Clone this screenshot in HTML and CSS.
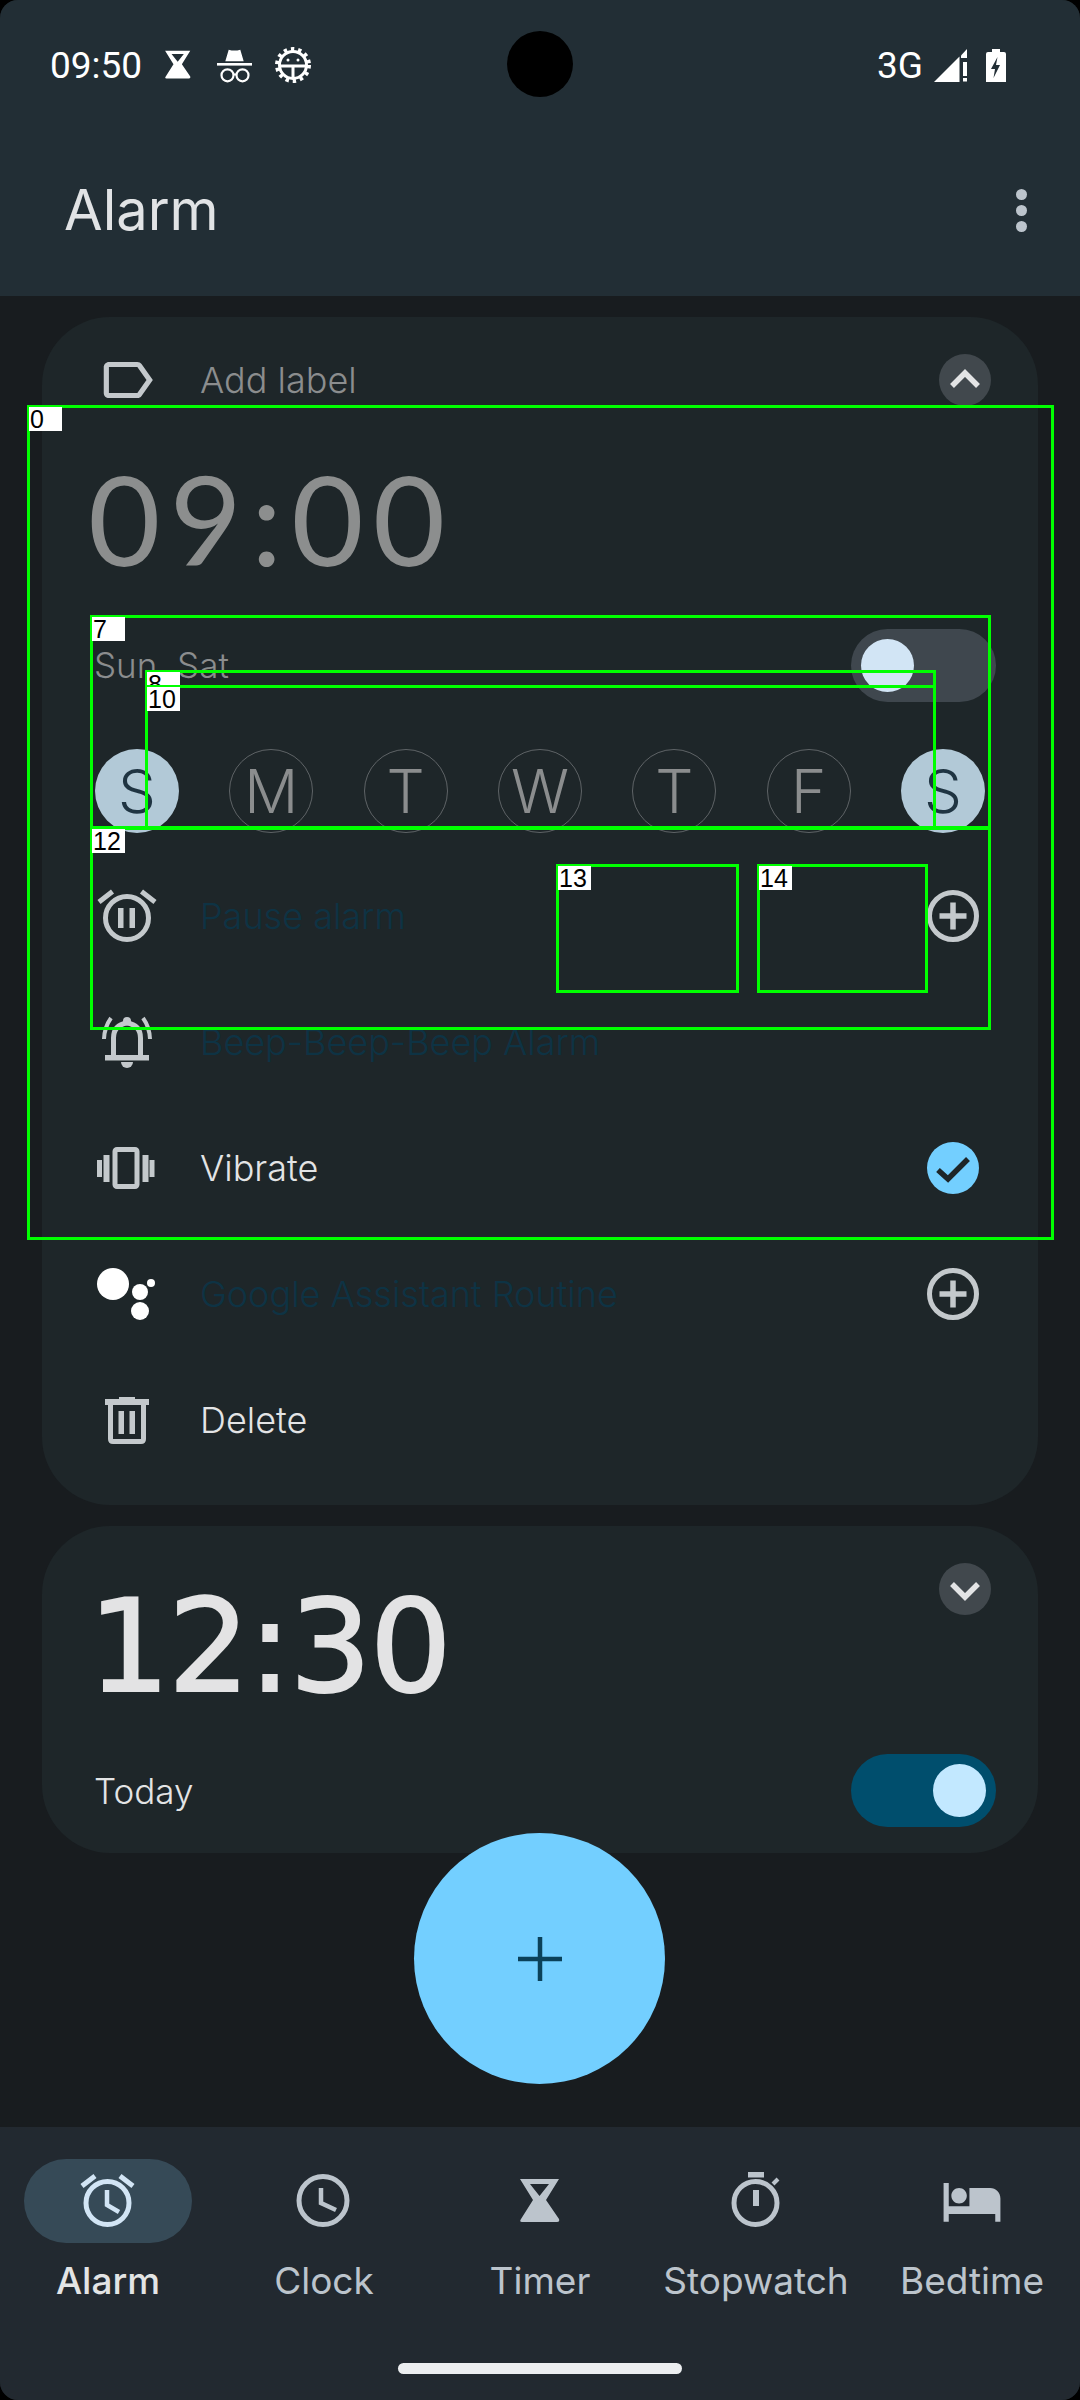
FILE: index.html
```html
<!DOCTYPE html>
<html lang="en">
<head>
    <meta charset="UTF-8">
    <meta name="viewport" content="width=device-width, initial-scale=1.0">
    <title>Alarm</title>
    <link rel="stylesheet" href="styles.css">
</head>
<body>
    <!-- Shared icons -->
    <svg class="defs" aria-hidden="true">
        <symbol id="hourglass" viewBox="0 0 62 62">
            <path fill-rule="evenodd" d="M11 9H50L37 30L50 49Q51 52 48 52H13Q10 52 12 49L24 30ZM21 14H40L30.5 26Z"/>
        </symbol>
        <symbol id="plusCircle" viewBox="0 0 52 52">
            <circle cx="26" cy="26" r="23.5" fill="none" stroke="currentColor" stroke-width="5"/>
            <path d="M12.5 26H39.5M26 12.5V39.5" stroke="currentColor" stroke-width="5.5"/>
        </symbol>
    </svg>

    <div class="phone">
        <header class="topbar">
            <div class="statusbar">
                <span class="status-time">09:50</span>
                <svg class="st-hourglass"><use href="#hourglass"/></svg>
                <svg class="st-incognito" viewBox="0 0 35 35">
                    <path d="M8.3 13.3L11.7 1.7Q17.5 3.5 23.3 1.7L26.7 13.3Z" fill="#fff"/>
                    <rect x="0" y="15" width="35" height="2.6" fill="#fff"/>
                    <g fill="none" stroke="#fff" stroke-width="2.2">
                        <circle cx="10.5" cy="27.3" r="6"/>
                        <circle cx="25.5" cy="27.3" r="6"/>
                        <path d="M16 26.5H20"/>
                    </g>
                </svg>
                <svg class="st-bug" viewBox="0 0 36 36">
                    <g fill="none" stroke="#fff">
                        <circle cx="18" cy="18" r="13.5" stroke-width="3"/>
                        <circle cx="18" cy="18" r="16" stroke-width="4" stroke-dasharray="3.4 3.88"/>
                        <path d="M5 19H31M18 19V31" stroke-width="3"/>
                    </g>
                    <circle cx="13" cy="13" r="1.5" fill="#fff"/>
                    <circle cx="23" cy="13" r="1.5" fill="#fff"/>
                </svg>
                <div class="camera"></div>
                <span class="status-net">3G</span>
                <svg class="st-signal" viewBox="0 0 33 33" fill="#fff">
                    <path d="M0 33L25.5 7.5V33Z"/>
                    <path d="M27 6.5L33 0V9H27Z"/>
                    <rect x="29" y="13" width="4" height="14"/>
                    <rect x="29" y="29" width="4" height="3.5"/>
                </svg>
                <svg class="st-battery" viewBox="0 0 20 33">
                    <path d="M6 0H14V3H18Q20 3 20 5V33H0V5Q0 3 2 3H6Z" fill="#fff"/>
                    <path d="M11.5 8L5 20H9L7.5 29L14 16H10Z" fill="#222e35"/>
                </svg>
            </div>
            <div class="titlebar">
                <h1 class="title">Alarm</h1>
                <div class="overflow"><span></span><span></span><span></span></div>
            </div>
        </header>

        <main class="list">
            <section class="card card-open">
                <div class="row row-label">
                    <svg class="row-icon" viewBox="0 0 24 24"><path d="M17.63 5.84C17.27 5.33 16.67 5 16 5L5 5.01C3.9 5.01 3 5.9 3 7v10c0 1.1.9 1.99 2 1.99L16 19c.67 0 1.27-.33 1.63-.84L22 12l-4.37-6.16zM16 17H5V7h11l3.55 5L16 17z"/></svg>
                    <span class="row-text text-muted">Add label</span>
                    <svg class="chevron" viewBox="0 0 52 52"><circle cx="26" cy="26" r="26" fill="#41484d"/><path d="M13 32L26 19L39 32" fill="none" stroke="#e3e4e5" stroke-width="5.5"/></svg>
                </div>
                <div class="time-off">09:00</div>
                <div class="repeat">
                    <span class="repeat-text text-muted">Sun, Sat</span>
                    <div class="switch"><div class="thumb"></div></div>
                </div>
                <div class="days">
                    <div class="day day-on">S</div>
                    <div class="day">M</div>
                    <div class="day">T</div>
                    <div class="day">W</div>
                    <div class="day">T</div>
                    <div class="day">F</div>
                    <div class="day day-on">S</div>
                </div>
                <div class="row">
                    <svg class="row-icon" viewBox="0 0 62 62">
                        <circle cx="31" cy="33" r="21.5" fill="none" stroke="currentColor" stroke-width="5"/>
                        <path d="M22 23h5.5v20H22zM33.5 23H39v20h-5.5z"/>
                        <path d="M3 17L16.5 6.5M59 17L45.5 6.5" stroke="currentColor" stroke-width="5"/>
                    </svg>
                    <span class="row-text text-dim">Pause alarm</span>
                    <svg class="row-end"><use href="#plusCircle"/></svg>
                </div>
                <div class="row">
                    <svg class="row-icon" viewBox="0 0 62 62">
                        <path d="M17.5 45V27Q17.5 14 31 12Q44.5 14 44.5 27V45" fill="none" stroke="currentColor" stroke-width="5"/>
                        <circle cx="31" cy="10" r="4"/>
                        <rect x="9" y="44" width="44" height="5.5"/>
                        <path d="M25 51H37A6 6 0 0 1 25 51Z"/>
                        <path d="M8 28Q8.5 16 15 7M54 28Q53.5 16 47 7" fill="none" stroke="currentColor" stroke-width="4"/>
                    </svg>
                    <span class="row-text text-dim">Beep-Beep-Beep Alarm</span>
                </div>
                <div class="row">
                    <svg class="row-icon" viewBox="0 0 62 62">
                        <rect x="19" y="12.5" width="22" height="37" rx="2" fill="none" stroke="currentColor" stroke-width="5"/>
                        <path d="M7.5 18h6v27h-6zM1 23h5v17H1zM46.5 18h6v27h-6zM53.5 23h5v17h-5z"/>
                    </svg>
                    <span class="row-text">Vibrate</span>
                    <svg class="row-end" viewBox="0 0 52 52">
                        <circle cx="26" cy="26" r="26" fill="#73cfff"/>
                        <path d="M11 28L21 37L41 17" fill="none" stroke="#1e2629" stroke-width="5.5"/>
                    </svg>
                </div>
                <div class="row">
                    <svg class="row-icon row-icon-white" viewBox="0 0 62 62">
                        <circle cx="17" cy="21" r="16"/>
                        <circle cx="44" cy="29" r="8"/>
                        <circle cx="44" cy="48" r="9"/>
                        <circle cx="55" cy="20" r="4"/>
                    </svg>
                    <span class="row-text text-dim">Google Assistant Routine</span>
                    <svg class="row-end"><use href="#plusCircle"/></svg>
                </div>
                <div class="row">
                    <svg class="row-icon" viewBox="0 0 62 62">
                        <path d="M23 8h16v3H23zM9 10h44v6H9zM22.5 22H28v23h-5.5zM33.5 22H39v23h-5.5z"/>
                        <path d="M14.5 16V50Q14.5 52.500 17 52.500H45Q47.500 52.500 47.500 50V16" fill="none" stroke="currentColor" stroke-width="5"/>
                    </svg>
                    <span class="row-text">Delete</span>
                </div>
            </section>

            <section class="card card-closed">
                <div class="closed-top">
                    <div class="time-on">12:30</div>
                    <svg class="chevron" viewBox="0 0 52 52"><circle cx="26" cy="26" r="26" fill="#41484d"/><path d="M13 21L26 34L39 21" fill="none" stroke="#e3e4e5" stroke-width="5.5"/></svg>
                </div>
                <div class="repeat repeat-on">
                    <span class="repeat-text">Today</span>
                    <div class="switch switch-on"><div class="thumb"></div></div>
                </div>
            </section>
        </main>

        <button class="fab"><svg viewBox="0 0 44 44"><path d="M0 22H44M22 0V44" stroke="#0a4159" stroke-width="4.500"/></svg></button>

        <nav class="bottomnav">
            <div class="tabs">
                <div class="tab tab-active">
                    <div class="tab-icon">
                        <svg class="line-icon" viewBox="0 0 62 62" stroke="currentColor" stroke-width="5">
                            <circle cx="30.500" cy="33" r="21.500"/>
                            <path d="M5 16L18 6M56 16L43 6"/>
                            <path d="M30 20V35L42 42" stroke-width="4.500"/>
                        </svg>
                    </div>
                    <span>Alarm</span>
                </div>
                <div class="tab">
                    <div class="tab-icon">
                        <svg class="line-icon" viewBox="0 0 62 62" stroke="currentColor" stroke-width="5">
                            <circle cx="30" cy="30.500" r="24"/>
                            <path d="M28 18V33L43 40" stroke-width="4.500"/>
                        </svg>
                    </div>
                    <span>Clock</span>
                </div>
                <div class="tab">
                    <div class="tab-icon"><svg><use href="#hourglass"/></svg></div>
                    <span>Timer</span>
                </div>
                <div class="tab">
                    <div class="tab-icon">
                        <svg viewBox="0 0 62 62">
                            <circle cx="30.500" cy="33" r="21.500" fill="none" stroke="currentColor" stroke-width="5"/>
                            <path d="M23 2h16v5.500H23zM28 20h6v16h-6z"/>
                            <path d="M48 14L53 9" stroke="currentColor" stroke-width="4"/>
                        </svg>
                    </div>
                    <span>Stopwatch</span>
                </div>
                <div class="tab">
                    <div class="tab-icon">
                        <svg viewBox="0 0 24 24"><path d="M7 13c1.660 0 3-1.340 3-3S8.660 7 7 7s-3 1.340-3 3 1.340 3 3 3zm12-6h-8v7H3V5H1v15h2v-3h18v3h2v-9c0-2.210-1.790-4-4-4z"/></svg>
                    </div>
                    <span>Bedtime</span>
                </div>
            </div>
            <div class="homebar"></div>
        </nav>

        <!-- Debug boxes drawn over the screen -->
        <div class="dbg dbg-0"><b>0</b></div>
        <div class="dbg dbg-7"><b>7</b></div>
        <div class="dbg dbg-8"><b>8</b></div>
        <div class="dbg dbg-10"><b>10</b></div>
        <div class="dbg dbg-12"><b>12</b></div>
        <div class="dbg dbg-13"><b>13</b></div>
        <div class="dbg dbg-14"><b>14</b></div>
    </div>
</body>
</html>
```

FILE: styles.css
```css
html, body {
    margin: 0;
    padding: 0;
    background: #000;
}

.defs {
    position: absolute;
    width: 0;
    height: 0;
}

.phone {
    position: relative;
    display: flex;
    flex-direction: column;
    width: 1080px;
    height: 2400px;
    overflow: hidden;
    border-radius: 18px;
    background: #181c1f;
    font-family: Inter, "Noto Sans", sans-serif;
    color: #e3e4e5;
}

/* Top bar */
.topbar {
    height: 296px;
    background: #222e35;
}

.statusbar {
    position: relative;
    display: flex;
    align-items: center;
    height: 130px;
    padding: 0 74px 0 50px;
    box-sizing: border-box;
    font-family: Roboto, sans-serif;
    font-size: 37px;
    color: #fff;
}

.status-time {
    width: 114px;
}

.st-hourglass {
    width: 40px;
    height: 40px;
    margin-left: -6px;
    fill: #fff;
}

.st-incognito {
    width: 35px;
    height: 35px;
    margin-left: 19px;
}

.st-bug {
    width: 36px;
    height: 36px;
    margin-left: 23px;
}

.camera {
    position: absolute;
    left: 507px;
    top: 31px;
    width: 66px;
    height: 66px;
    border-radius: 50%;
    background: #000;
}

.status-net {
    margin-left: auto;
}

.st-signal {
    width: 33px;
    height: 33px;
    margin-left: 11px;
}

.st-battery {
    width: 20px;
    height: 33px;
    margin-left: 19px;
}

.titlebar {
    display: flex;
    align-items: center;
    justify-content: space-between;
    height: 160px;
    padding: 0 53px 0 64px;
}

.title {
    margin: 0;
    font-size: 56px;
    font-weight: 400;
    color: #e1e3e5;
}

.overflow {
    display: flex;
    flex-direction: column;
    gap: 5px;
}

.overflow span {
    width: 11px;
    height: 11px;
    border-radius: 50%;
    background: #bcc4cc;
}

/* Alarm cards */
.list {
    flex: 1;
    display: flex;
    flex-direction: column;
    gap: 21px;
    padding: 21px 42px 0;
}

.card {
    border-radius: 68px;
    background: #1e2629;
}

.card-open {
    height: 1188px;
}

.card-closed {
    height: 327px;
}

.row {
    display: flex;
    align-items: center;
    height: 126px;
    padding: 0 59px 0 54px;
}

.row-label {
    padding-right: 47px;
}

.row-icon {
    flex: none;
    width: 62px;
    height: 62px;
    fill: #c4c9cc;
    color: #c4c9cc;
}

.row-icon-white {
    fill: #fff;
}

.row-text {
    margin-left: 42px;
    font-size: 36px;
    font-weight: 300;
}

.row-end {
    flex: none;
    width: 52px;
    height: 52px;
    margin-left: auto;
    color: #c4c9cc;
}

.chevron {
    flex: none;
    width: 52px;
    height: 52px;
    margin-left: auto;
}

.text-muted {
    color: #8b8d8e;
}

.text-dim {
    color: #0e3344;
}

.time-off {
    height: 174px;
    padding-left: 46px;
    font-family: Lato, sans-serif;
    font-size: 125px;
    line-height: 150px;
    letter-spacing: 9px;
    color: #8c8e8e;
}

.repeat {
    display: flex;
    align-items: center;
    justify-content: space-between;
    height: 96px;
    padding: 0 42px 0 52px;
}

.repeat-text {
    font-size: 35px;
    font-weight: 300;
}

.switch {
    display: flex;
    align-items: center;
    width: 145px;
    height: 73px;
    padding: 0 10px;
    box-sizing: border-box;
    border-radius: 37px;
    background: #3f474e;
}

.thumb {
    width: 53px;
    height: 53px;
    border-radius: 50%;
    background: #d2e5f5;
}

.switch-on {
    justify-content: flex-end;
    background: #004e6d;
}

.switch-on .thumb {
    background: #c2e8ff;
}

.days {
    display: flex;
    justify-content: space-between;
    margin: 36px 0 20px;
    padding: 0 53px;
}

.day {
    display: flex;
    align-items: center;
    justify-content: center;
    width: 84px;
    height: 84px;
    box-sizing: border-box;
    border: 1px solid #5e6366;
    border-radius: 50%;
    font-size: 60px;
    font-weight: 300;
    color: #8b8d8e;
}

.day-on {
    border: none;
    background: #b2c9d7;
    color: #1f3442;
}

.closed-top {
    display: flex;
    height: 228px;
    padding: 37px 47px 0 46px;
    box-sizing: border-box;
}

.time-on {
    font-family: "DejaVu Sans", sans-serif;
    font-size: 129px;
    line-height: 166px;
    letter-spacing: -2px;
    color: #e3e3e4;
    -webkit-text-stroke: 2px #e3e3e4;
}

.repeat-on {
    height: 73px;
}

/* Floating add button */
.fab {
    position: absolute;
    left: 414px;
    top: 1833px;
    display: flex;
    align-items: center;
    justify-content: center;
    width: 251px;
    height: 251px;
    padding: 0;
    border: none;
    border-radius: 50%;
    background: #73cfff;
}

.fab svg {
    width: 44px;
    height: 44px;
}

/* Bottom navigation */
.bottomnav {
    display: flex;
    flex-direction: column;
    height: 273px;
    background: #222930;
}

.tabs {
    display: grid;
    grid-template-columns: repeat(5, 1fr);
    padding-top: 32px;
}

.tab {
    display: flex;
    flex-direction: column;
    align-items: center;
    font-size: 37px;
    line-height: 40px;
    color: #bcc4cc;
}

.tab-icon {
    display: flex;
    align-items: center;
    justify-content: center;
    width: 168px;
    height: 84px;
    margin-bottom: 18px;
    border-radius: 42px;
}

.tab-icon svg {
    width: 62px;
    height: 62px;
    fill: #bcc4cc;
}

.tab-icon svg.line-icon {
    fill: none;
}

.tab-active {
    font-weight: 500;
    color: #e3e4e5;
}

.tab-active .tab-icon {
    background: #364a57;
    color: #d2e5f5;
}

.homebar {
    align-self: center;
    width: 284px;
    height: 11px;
    margin-top: 62px;
    border-radius: 6px;
    background: #eceef0;
}

/* Debug boxes */
.dbg {
    position: absolute;
    box-sizing: border-box;
    border: 3px solid #00ff00;
}

.dbg b {
    display: block;
    width: 33px;
    height: 24px;
    margin: -1px 0 0 -1px;
    background: #fff;
    color: #000;
    font-family: "Liberation Sans", sans-serif;
    font-size: 25px;
    font-weight: 400;
    line-height: 24px;
    padding-left: 1px;
    box-sizing: border-box;
}

.dbg-0 { left: 27px; top: 405px; width: 1027px; height: 835px; }
.dbg-7 { left: 90px; top: 615px; width: 901px; height: 214px; }
.dbg-8 { left: 145px; top: 670px; width: 791px; height: 159px; }
.dbg-10 { left: 145px; top: 685px; width: 791px; height: 144px; }
.dbg-12 { left: 90px; top: 827px; width: 901px; height: 203px; }
.dbg-13 { left: 556px; top: 864px; width: 183px; height: 129px; }
.dbg-14 { left: 757px; top: 864px; width: 171px; height: 129px; }
```
